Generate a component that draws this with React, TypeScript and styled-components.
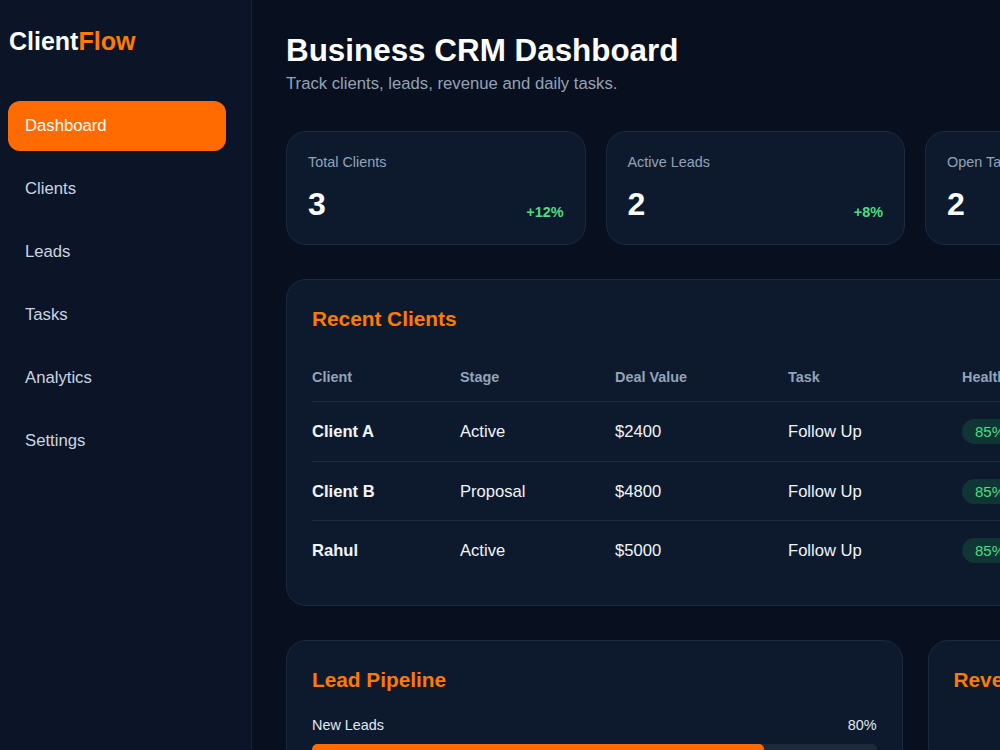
import React from "react";
import styled, { createGlobalStyle } from "styled-components";

const GlobalStyle = createGlobalStyle`
  html, body {
    margin: 0;
    padding: 0;
    overflow: hidden;
    background: #080f1e;
  }
  body {
    font-family: "Liberation Sans", Arial, sans-serif;
    color: #ffffff;
  }
  * { box-sizing: border-box; }
`;

const Layout = styled.div`
  display: flex;
  min-height: 100vh;
  width: max-content;
`;

const Sidebar = styled.aside`
  width: 252px;
  flex-shrink: 0;
  min-height: 100vh;
  background: #0b1527;
  border-right: 1px solid #182336;
  padding: 27px 25px 0 8px;
`;

const Logo = styled.div`
  font-size: 25px;
  font-weight: 700;
  line-height: 1.15;
  color: #ffffff;
  margin-bottom: 45px;
  padding-left: 1px;
`;

const LogoAccent = styled.span`
  color: #ff7a00;
`;

const Nav = styled.nav`
  display: flex;
  flex-direction: column;
  gap: 13px;
`;

const NavItem = styled.div<{ $active?: boolean }>`
  height: 50px;
  display: flex;
  align-items: center;
  padding: 0 17px;
  border-radius: 12px;
  font-size: 16.7px;
  color: ${(p) => (p.$active ? "#ffffff" : "#cbd5e1")};
  background: ${(p) => (p.$active ? "#ff6b00" : "transparent")};
`;

const Main = styled.main`
  width: 1326px;
  padding: 33px 34px 40px;
`;

const Title = styled.h1`
  margin: 0;
  font-size: 31.4px;
  line-height: 36.8px;
  font-weight: 700;
  color: #ffffff;
`;

const Subtitle = styled.p`
  margin: 4px 0 38px;
  font-size: 16.7px;
  line-height: 19px;
  color: #94a3b8;
`;

const StatGrid = styled.section`
  display: grid;
  grid-template-columns: repeat(4, 1fr);
  gap: 20px;
  margin-bottom: 34px;
`;

const Card = styled.div`
  background: #0d1a2e;
  border: 1px solid #1c2a40;
  border-radius: 20px;
`;

const StatCard = styled(Card)`
  padding: 22px 21px 21px;
  height: 114px;
  display: flex;
  flex-direction: column;
  justify-content: space-between;
`;

const StatLabel = styled.div`
  font-size: 14.4px;
  line-height: 16.6px;
  color: #94a3b8;
`;

const StatRow = styled.div`
  display: flex;
  justify-content: space-between;
  align-items: flex-end;
`;

const StatValue = styled.div`
  font-size: 32px;
  line-height: 36.8px;
  font-weight: 700;
  color: #ffffff;
`;

const StatChange = styled.div`
  font-size: 14.4px;
  line-height: 16.6px;
  font-weight: 600;
  color: #4ade80;
  margin-bottom: 2px;
`;

const Panel = styled(Card)`
  padding: 27px 25px 25px;
`;

const PanelTitle = styled.h2`
  margin: 0;
  font-size: 20.8px;
  line-height: 24px;
  font-weight: 700;
  color: #ff7a00;
`;

const Table = styled.table`
  width: 100%;
  margin-top: 23px;
  border-collapse: collapse;
  table-layout: fixed;
`;

const Th = styled.th`
  text-align: left;
  padding: 15px 0 16px;
  font-size: 14.4px;
  line-height: 16.6px;
  font-weight: 700;
  color: #94a3b8;
  border-bottom: 1px solid #1e2a3d;
`;

const Tr = styled.tr`
  & + & td {
    border-top: 1px solid #1e2a3d;
  }
`;

const Td = styled.td<{ $strong?: boolean }>`
  padding: 0;
  height: 59.5px;
  font-size: 16.6px;
  line-height: 19px;
  font-weight: ${(p) => (p.$strong ? 700 : 400)};
  color: #f1f5f9;
  vertical-align: middle;
`;

const Pill = styled.span`
  display: inline-block;
  vertical-align: middle;
  padding: 4px 13px;
  border-radius: 999px;
  font-size: 15px;
  line-height: 17px;
  color: #4ade80;
  background: rgba(34, 197, 94, 0.16);
`;

const BottomGrid = styled.section`
  display: grid;
  grid-template-columns: 1fr 1fr;
  gap: 25px;
  margin-top: 34px;
`;

const ProgressItem = styled.div`
  margin-top: 25px;
  & + & {
    margin-top: 20px;
  }
`;

const ProgressHead = styled.div`
  display: flex;
  justify-content: space-between;
  font-size: 14.4px;
  line-height: 17px;
  color: #e2e8f0;
  margin-bottom: 10px;
`;

const Track = styled.div`
  height: 10px;
  border-radius: 6px;
  background: #1e293b;
  overflow: hidden;
`;

const Fill = styled.div`
  height: 100%;
  border-radius: 6px;
  background: #ff6b00;
`;

const RevenueBody = styled.div`
  margin-top: 80px;
  display: flex;
  flex-direction: column;
  gap: 8px;
`;

const RevenueValue = styled.div`
  font-size: 32px;
  font-weight: 700;
  color: #ffffff;
`;

const RevenueNote = styled.div`
  font-size: 14.4px;
  color: #94a3b8;
`;

const navItems = ["Dashboard", "Clients", "Leads", "Tasks", "Analytics", "Settings"];

const stats = [
  { label: "Total Clients", value: "3", change: "+12%" },
  { label: "Active Leads", value: "2", change: "+8%" },
  { label: "Open Tasks", value: "2", change: "+5%" },
  { label: "Revenue", value: "$12200", change: "+15%" },
];

const clients = [
  { name: "Client A", stage: "Active", value: "$2400", task: "Follow Up", health: "85%" },
  { name: "Client B", stage: "Proposal", value: "$4800", task: "Follow Up", health: "85%" },
  { name: "Rahul", stage: "Active", value: "$5000", task: "Follow Up", health: "85%" },
];

const pipeline = [
  { label: "New Leads", pct: 80 },
  { label: "Proposals", pct: 55 },
  { label: "Closed", pct: 35 },
];

export default function App() {
  return (
    <>
      <GlobalStyle />
      <Layout>
        <Sidebar>
          <Logo>
            Client<LogoAccent>Flow</LogoAccent>
          </Logo>
          <Nav>
            {navItems.map((item, i) => (
              <NavItem key={item} $active={i === 0}>
                {item}
              </NavItem>
            ))}
          </Nav>
        </Sidebar>
        <Main>
          <Title>Business CRM Dashboard</Title>
          <Subtitle>Track clients, leads, revenue and daily tasks.</Subtitle>

          <StatGrid>
            {stats.map((s) => (
              <StatCard key={s.label}>
                <StatLabel>{s.label}</StatLabel>
                <StatRow>
                  <StatValue>{s.value}</StatValue>
                  <StatChange>{s.change}</StatChange>
                </StatRow>
              </StatCard>
            ))}
          </StatGrid>

          <Panel>
            <PanelTitle>Recent Clients</PanelTitle>
            <Table>
              <colgroup>
                <col style={{ width: 148 }} />
                <col style={{ width: 155 }} />
                <col style={{ width: 173 }} />
                <col style={{ width: 174 }} />
                <col />
              </colgroup>
              <thead>
                <tr>
                  <Th>Client</Th>
                  <Th>Stage</Th>
                  <Th>Deal Value</Th>
                  <Th>Task</Th>
                  <Th>Health</Th>
                </tr>
              </thead>
              <tbody>
                {clients.map((c) => (
                  <Tr key={c.name}>
                    <Td $strong>{c.name}</Td>
                    <Td>{c.stage}</Td>
                    <Td>{c.value}</Td>
                    <Td>{c.task}</Td>
                    <Td>
                      <Pill>{c.health}</Pill>
                    </Td>
                  </Tr>
                ))}
              </tbody>
            </Table>
          </Panel>

          <BottomGrid>
            <Panel>
              <PanelTitle>Lead Pipeline</PanelTitle>
              {pipeline.map((p) => (
                <ProgressItem key={p.label}>
                  <ProgressHead>
                    <span>{p.label}</span>
                    <span>{p.pct}%</span>
                  </ProgressHead>
                  <Track>
                    <Fill style={{ width: `${p.pct}%` }} />
                  </Track>
                </ProgressItem>
              ))}
            </Panel>
            <Panel>
              <PanelTitle>Revenue Overview</PanelTitle>
              <RevenueBody>
                <RevenueValue>$12200</RevenueValue>
                <RevenueNote>Total pipeline value this month</RevenueNote>
              </RevenueBody>
            </Panel>
          </BottomGrid>
        </Main>
      </Layout>
    </>
  );
}
